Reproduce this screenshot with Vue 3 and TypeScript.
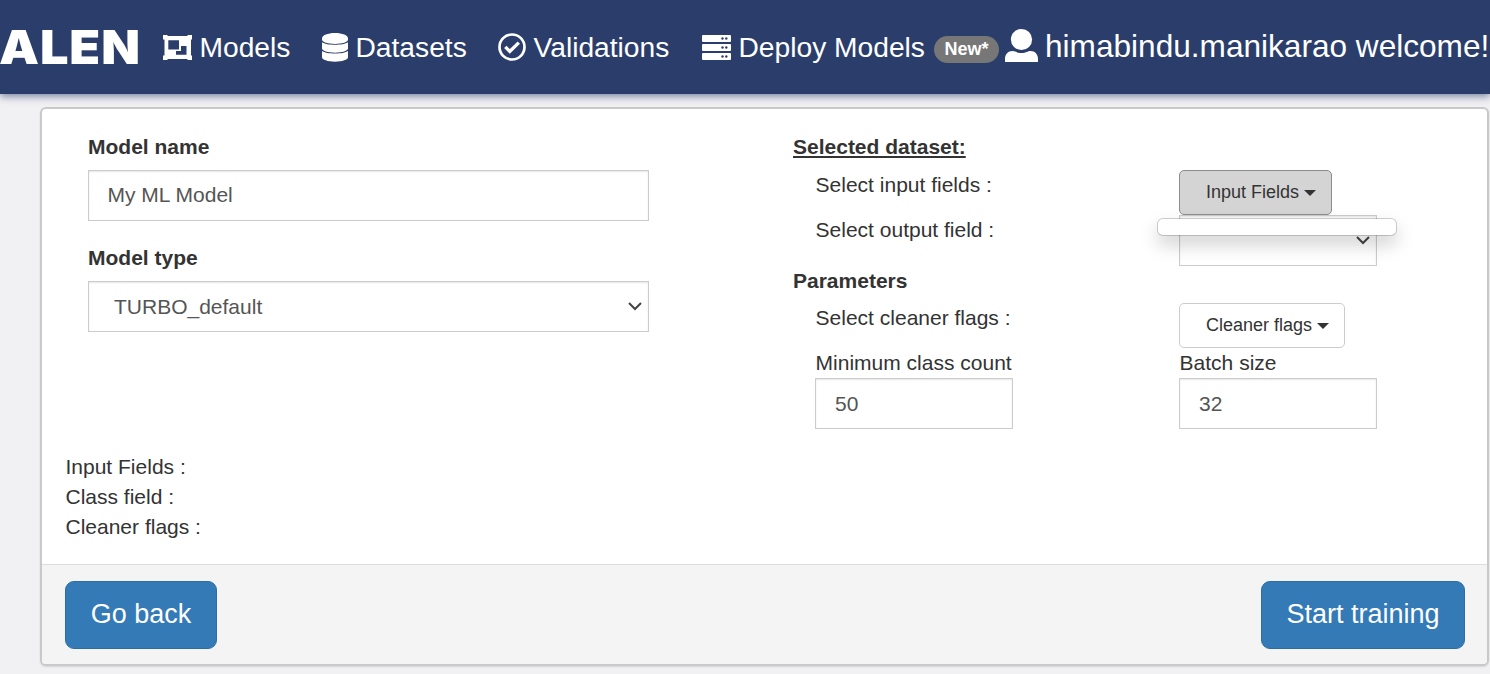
<script setup lang="ts">
import { ref } from 'vue'

const modelName = ref('My ML Model')
const modelType = ref('TURBO_default')
const minClassCount = ref('50')
const batchSize = ref('32')
const summary: string[] = ['Input Fields :', 'Class field :', 'Cleaner flags :']
</script>

<template>
  <div class="page">
    <header class="navbar">
      <div class="brand"><span>ALEN</span></div>
      <nav class="links">
        <a class="link models">
          <svg class="icon" width="29" height="25" viewBox="0 0 29 25" fill="#fff" fill-rule="evenodd">
            <path d="M0 0h4.500v1h20V0H29v4.500h-1v16h1V25h-4.500v-1h-20v1H0v-4.500h1.500v-16H0zM5.300 5.300v9.200H16V5.300zM18 11v5h-5v3.700h10.500V11z" />
          </svg>
          <span>Models</span>
        </a>
        <a class="link datasets">
          <svg class="icon" width="26" height="29" viewBox="0 0 26 29" fill="#fff">
            <path d="M0 5.500C0 2.300 5.600 0 13 0s13 2.300 13 5.500v1.200c0 2.200-5.800 4.200-13 4.200S0 8.900 0 6.700z" />
            <path d="M0 9.300c2.300 1.700 7.300 2.500 13 2.500s10.700-.8 13-2.500v6.200c0 2.200-5.800 4.200-13 4.200S0 17.700 0 15.500z" />
            <path d="M0 18.100c2.300 1.700 7.300 2.500 13 2.500s10.700-.8 13-2.500v6.200c0 2.400-5.800 4.400-13 4.400S0 26.700 0 24.300z" />
          </svg>
          <span>Datasets</span>
        </a>
        <a class="link validations">
          <svg class="icon" width="28" height="28" viewBox="0 0 28 28" fill="none" stroke="#fff">
            <circle cx="14" cy="14" r="12.500" stroke-width="2.700" />
            <path d="M7.300 13.900l4.500 4.500 9-8.800" stroke-width="3.400" />
          </svg>
          <span>Validations</span>
        </a>
        <a class="link deploy">
          <svg class="icon" width="29" height="25" viewBox="0 0 29 25">
            <g fill="#fff">
              <rect width="29" height="7" rx="1" />
              <rect y="9" width="29" height="7" rx="1" />
              <rect y="18" width="29" height="7" rx="1" />
            </g>
            <g fill="#2b3e6b">
              <circle v-for="n in 6" :key="n" :cx="n % 2 ? 20.5 : 24.3" :cy="3.500 + Math.floor((n - 1) / 2) * 9" r="1.200" />
            </g>
          </svg>
          <span>Deploy Models</span>
          <span class="badge">New*</span>
        </a>
      </nav>
      <div class="user">
        <svg width="33" height="33" viewBox="0 0 33 33" fill="#fff">
          <ellipse cx="16.500" cy="10.500" rx="10.600" ry="10.500" />
          <path d="M0 33v-3c0-4.500 3-8 7.500-8 3 0 4 2 9 2s6-2 9-2c4.500 0 7.500 3.500 7.500 8v3z" />
        </svg>
        <span>himabindu.manikarao welcome!</span>
      </div>
    </header>

    <main class="panel">
      <div class="body">
        <section class="left">
          <label class="title">Model name</label>
          <input v-model="modelName" class="control name" type="text" />
          <label class="title second">Model type</label>
          <div class="control select">
            <span>{{ modelType }}</span>
            <svg class="chevron" width="14" height="9" viewBox="0 0 14 9"><path d="M1 1l6 6 6-6" /></svg>
          </div>
        </section>

        <section class="right">
          <div class="title"><u>Selected dataset:</u></div>
          <div class="row first">
            <span class="text">Select input fields :</span>
            <div class="dropdown">
              <button class="btn active">Input Fields <i class="caret"></i></button>
              <div class="menu"></div>
            </div>
          </div>
          <div class="row output">
            <span class="text">Select output field :</span>
            <div class="control select small">
              <span></span>
              <svg class="chevron" width="14" height="9" viewBox="0 0 14 9"><path d="M1 1l6 6 6-6" /></svg>
            </div>
          </div>
          <div class="title">Parameters</div>
          <div class="row flags">
            <span class="text">Select cleaner flags :</span>
            <div><button class="btn">Cleaner flags <i class="caret"></i></button></div>
          </div>
          <div class="row">
            <label><span class="text">Minimum class count</span><input v-model="minClassCount" class="control small" type="text" /></label>
            <label><span class="text">Batch size</span><input v-model="batchSize" class="control small" type="text" /></label>
          </div>
        </section>
      </div>
      <div class="summary">
        <div v-for="line in summary" :key="line">{{ line }}</div>
      </div>
      <footer class="footer">
        <button class="primary back">Go back</button>
        <button class="primary start">Start training</button>
      </footer>
    </main>
  </div>
</template>

<style>
body {
  margin: 0;
  background: #f1f1f3;
  overflow: hidden;
}
</style>

<style scoped>
* {
  box-sizing: border-box;
}
.page {
  width: 1490px;
  height: 674px;
  background: #f1f1f3;
  color: #333;
  font: 21px/30px "Liberation Sans", Arial, sans-serif;
  overflow: hidden;
}
.navbar {
  display: flex;
  align-items: center;
  height: 94px;
  background: #2b3e6b;
  color: #fff;
  box-shadow: 0 2px 8px rgba(43, 62, 107, 0.65);
  white-space: nowrap;
}
.brand {
  width: 163px;
  flex: none;
  font: 900 46.500px/60px Inter, "Liberation Sans", sans-serif;
}
.brand span {
  display: inline-block;
  margin-left: -1px;
  letter-spacing: 0.800px;
  transform: scaleX(1.085);
  transform-origin: 0 50%;
}
.links {
  display: flex;
  flex: none;
  width: 842px;
  font-size: 28.200px;
  line-height: 40px;
}
.link {
  display: flex;
  align-items: center;
  flex: none;
  gap: 7.500px;
}
.icon {
  flex: none;
}
.models {
  width: 159px;
}
.datasets {
  width: 176px;
}
.validations {
  width: 204px;
}
.badge {
  width: 65px;
  height: 27px;
  margin: 4px 0 0 1.500px;
  border-radius: 14px;
  background: #777;
  font-size: 18px;
  font-weight: 700;
  line-height: 27px;
  text-align: center;
}
.user {
  display: flex;
  align-items: center;
  gap: 7px;
  flex: none;
  margin-top: -3px;
  font-size: 31.600px;
  line-height: 40px;
}
.panel {
  width: 1449px;
  height: 559px;
  margin: 13px 0 0 40px;
  border: 2px solid #c9c9c9;
  border-radius: 6px;
  background: #fff;
  box-shadow: 0 1px 2px rgba(0, 0, 0, 0.12);
}
.body {
  display: flex;
  height: 343px;
  padding: 23px 0 0 46px;
}
.left {
  width: 561px;
  margin-right: 144px;
}
.title {
  display: block;
  height: 30px;
  font-weight: 700;
}
.second {
  margin-top: 22px;
}
.control {
  display: block;
  width: 100%;
  height: 51px;
  padding: 0 19px;
  border: 1px solid #ccc;
  border-radius: 0;
  background: #fff;
  color: #555;
  font: 21px/49px "Liberation Sans", Arial, sans-serif;
  box-shadow: inset 0 1px 2px rgba(0, 0, 0, 0.1);
  outline: none;
}
.left .control {
  margin-top: 8px;
}
.name {
  padding: 0 18.500px 2px;
}
.select {
  display: flex;
  align-items: center;
  justify-content: space-between;
  padding: 0 6px 0 25px;
}
.chevron {
  fill: none;
  stroke: #444;
  stroke-width: 2;
}
.small {
  width: 198px;
}
.row {
  display: grid;
  grid-template-columns: 364px 198px;
  align-items: start;
  height: 45px;
  padding-left: 22px;
}
.text {
  display: block;
  padding-left: 0.600px;
}
.first {
  margin-top: 8px;
}
.output {
  height: 51px;
}
.flags {
  margin-top: 7px;
}
.dropdown {
  position: relative;
}
.btn {
  display: flex;
  align-items: center;
  height: 45px;
  padding: 0 15px 2px 26px;
  border: 1px solid #ccc;
  border-radius: 5px;
  background: #fff;
  color: #333;
  font: 18px/26px "Liberation Sans", Arial, sans-serif;
  white-space: nowrap;
}
.active {
  border-color: #8c8c8c;
  background: #d4d4d4;
}
.caret {
  margin: 3px 0 0 5px;
  border-top: 6px solid #333;
  border-left: 6px solid transparent;
  border-right: 6px solid transparent;
}
.menu {
  position: absolute;
  z-index: 2;
  top: 48px;
  left: -22px;
  width: 240px;
  height: 18px;
  border: 1px solid rgba(0, 0, 0, 0.18);
  border-radius: 6px;
  background: #fff;
  background-clip: padding-box;
  box-shadow: 0 9px 18px rgba(0, 0, 0, 0.18);
}
.summary {
  height: 112px;
  padding-left: 23.500px;
}
.footer {
  display: flex;
  justify-content: space-between;
  height: 100px;
  padding: 16px 22px 0 23px;
  border-top: 1px solid #ddd;
  border-radius: 0 0 4px 4px;
  background: #f4f4f4;
}
.primary {
  height: 68px;
  padding: 0 0 3px;
  border: 1px solid #2e6da4;
  border-radius: 9px;
  background: #337ab7;
  color: #fff;
  font: 27px/36px "Liberation Sans", Arial, sans-serif;
}
.back {
  width: 152px;
}
.start {
  width: 204px;
}
</style>
